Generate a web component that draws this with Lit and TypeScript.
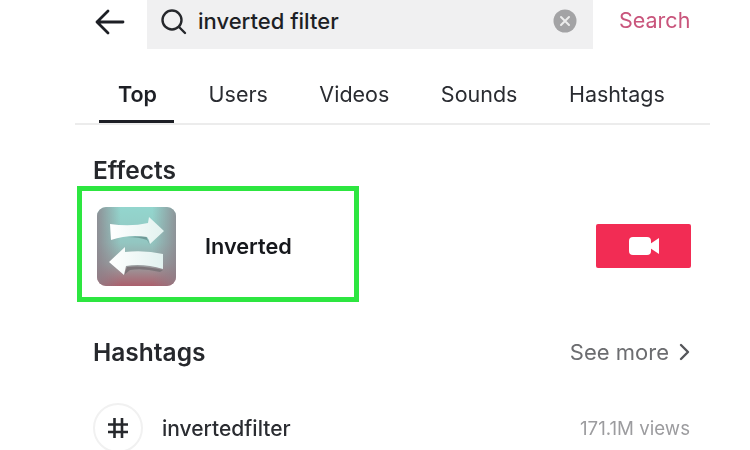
import { LitElement, html, css } from 'lit';
import { customElement } from 'lit/decorators.js';

const tabs = ['Top', 'Users', 'Videos', 'Sounds', 'Hashtags'];

@customElement('app-root')
export class AppRoot extends LitElement {
  static styles = css`
    :host {
      display: block;
      width: 750px;
      height: 450px;
      overflow: hidden;
      background: #fff;
      font-family: Inter, "Liberation Sans", sans-serif;
      color: #1d1f25;
    }
    .page {
      width: 635px;
      margin-left: 75px;
      filter: blur(0.5px);
    }
    .topbar {
      display: flex;
      align-items: center;
      height: 49px;
    }
    .back {
      width: 30px;
      height: 28px;
      margin: 0 0 5px 20px;
    }
    .searchbox {
      display: flex;
      align-items: center;
      width: 446px;
      height: 49px;
      margin-left: 22px;
      padding: 0 16px 7px 13px;
      box-sizing: border-box;
      background: #f0f0f1;
    }
    .searchbox .glass {
      width: 27px;
      height: 27px;
    }
    .query {
      flex: 1;
      margin-left: 11px;
      font-size: 22px;
      font-weight: 500;
    }
    .clear {
      width: 24px;
      height: 24px;
    }
    .search-btn {
      margin: 0 0 9px 26px;
      font-size: 21.5px;
      color: #c9557c;
    }
    .tabs {
      display: flex;
      gap: 51.5px;
      height: 76px;
      padding: 32px 0 0 43px;
      box-sizing: border-box;
      border-bottom: 2px solid #ececec;
      font-size: 21.5px;
      color: #2a2c31;
    }
    .tab {
      position: relative;
      line-height: 26px;
    }
    .tab.active {
      font-weight: 600;
      color: #1d1f25;
    }
    .tab.active::after {
      content: "";
      position: absolute;
      left: -19px;
      right: -17px;
      top: 39px;
      height: 3px;
      background: #1d1f25;
    }
    h2 {
      margin: 0;
      font-size: 24.5px;
      font-weight: 600;
      line-height: 28px;
      color: #26282c;
    }
    .effects {
      padding: 31px 19px 0 0;
    }
    .effects h2 {
      padding-left: 18px;
    }
    .effect-row {
      display: flex;
      align-items: center;
      justify-content: space-between;
      margin-top: 2px;
    }
    .effect {
      display: flex;
      align-items: center;
      width: 282px;
      height: 116px;
      margin-left: 2px;
      padding: 4px 0 0 15px;
      box-sizing: border-box;
      border: 5px solid #2de640;
    }
    .effect svg {
      width: 79px;
      height: 79px;
    }
    .effect-name {
      margin-left: 29px;
      font-size: 21.7px;
      font-weight: 600;
      color: #16181c;
    }
    .record {
      display: flex;
      align-items: center;
      justify-content: center;
      width: 95px;
      height: 44px;
      margin-top: 4px;
      border-radius: 2px;
      background: #f22c54;
    }
    .record svg {
      width: 30px;
      height: 18px;
    }
    .hashtags {
      padding: 36px 20px 0 18px;
    }
    .section-head {
      display: flex;
      align-items: center;
      justify-content: space-between;
    }
    .see-more {
      display: flex;
      align-items: center;
      gap: 10px;
      font-size: 22px;
      color: #6c6d70;
    }
    .see-more svg {
      width: 11px;
      height: 18px;
    }
    .tag-row {
      display: flex;
      align-items: center;
      margin-top: 37px;
    }
    .tag-icon {
      display: flex;
      align-items: center;
      justify-content: center;
      width: 50px;
      height: 50px;
      border: 2px solid #f1f1f1;
      border-radius: 50%;
      box-sizing: border-box;
    }
    .tag-icon svg {
      width: 20px;
      height: 22px;
    }
    .tag-name {
      flex: 1;
      margin-left: 19px;
      font-size: 21px;
      font-weight: 500;
      color: #2a2c31;
    }
    .views {
      font-size: 18.7px;
      color: #9c9c9f;
    }
  `;

  effectIcon() {
    return html`<svg viewBox="0 0 79 79">
      <defs>
        <linearGradient id="base" x1="0" y1="0" x2="0" y2="1">
          <stop offset="0" stop-color="#93d6ce"></stop>
          <stop offset="0.45" stop-color="#93c6c1"></stop>
          <stop offset="0.72" stop-color="#98a3a4"></stop>
          <stop offset="1" stop-color="#ab5f6c"></stop>
        </linearGradient>
        <linearGradient id="side" x1="0" y1="0" x2="1" y2="0">
          <stop offset="0" stop-color="#8c7f88" stop-opacity="0.8"></stop>
          <stop offset="0.3" stop-color="#8c7f88" stop-opacity="0"></stop>
          <stop offset="0.7" stop-color="#8c7f88" stop-opacity="0"></stop>
          <stop offset="1" stop-color="#8c7f88" stop-opacity="0.75"></stop>
        </linearGradient>
        <linearGradient id="arrow" x1="0" y1="0" x2="1" y2="0">
          <stop offset="0" stop-color="#ffffff"></stop>
          <stop offset="1" stop-color="#e2f2ef"></stop>
        </linearGradient>
      </defs>
      <rect width="79" height="79" rx="9" fill="url(#base)"></rect>
      <rect width="79" height="79" rx="9" fill="url(#side)"></rect>
      <path d="M30 30 Q42 30 50 33 L53 38 L49 29 Z" fill="#6f9a97"></path>
      <path d="M30 60 Q45 58 66 63 L63 65 Q46 61 33 63 L27 68 Z" fill="#7c7478"></path>
      <path d="M13 17 Q34 20 51 16 L52 10 L67 24 L53 37 Q52 32 50 30 Q32 27 14 33 Z" fill="url(#arrow)"></path>
      <path d="M12 55 L28 40 L28 45 Q48 43 66 47 L66 62 Q46 56 29 59 L27 68 Z" fill="url(#arrow)"></path>
    </svg>`;
  }

  render() {
    return html`
      <div class="page">
        <div class="topbar">
          <svg class="back" viewBox="0 0 30 28" fill="none" stroke="#1d1f25" stroke-width="2.8" stroke-linecap="round" stroke-linejoin="round">
            <path d="M2 14H28M13 3L2 14L13 25"></path>
          </svg>
          <div class="searchbox">
            <svg class="glass" viewBox="0 0 27 27" fill="none" stroke="#26282c" stroke-width="2.4" stroke-linecap="round">
              <circle cx="12" cy="12" r="9.5"></circle>
              <path d="M19 19L25 25"></path>
            </svg>
            <span class="query">inverted filter</span>
            <svg class="clear" viewBox="0 0 24 24">
              <circle cx="12" cy="12" r="11.5" fill="#a3a3a5"></circle>
              <path d="M8 8L16 16M16 8L8 16" stroke="#ececec" stroke-width="2" stroke-linecap="round"></path>
            </svg>
          </div>
          <span class="search-btn">Search</span>
        </div>
        <div class="tabs">
          ${tabs.map((t, i) => html`<span class="tab ${i === 0 ? 'active' : ''}">${t}</span>`)}
        </div>
        <section class="effects">
          <h2>Effects</h2>
          <div class="effect-row">
            <div class="effect">
              ${this.effectIcon()}
              <span class="effect-name">Inverted</span>
            </div>
            <div class="record">
              <svg viewBox="0 0 30 18">
                <rect x="0" y="0" width="22" height="18" rx="4" fill="#fff"></rect>
                <path d="M21 7L30 1V17L21 11Z" fill="#fff"></path>
              </svg>
            </div>
          </div>
        </section>
        <section class="hashtags">
          <div class="section-head">
            <h2>Hashtags</h2>
            <span class="see-more">See more
              <svg viewBox="0 0 11 18" fill="none" stroke="#55565a" stroke-width="2.4" stroke-linecap="round" stroke-linejoin="round">
                <path d="M2 2L9 9L2 16"></path>
              </svg>
            </span>
          </div>
          <div class="tag-row">
            <div class="tag-icon">
              <svg viewBox="0 0 20 22" fill="none" stroke="#26282c" stroke-width="2.6">
                <path d="M6.5 1V21M14 1V21M0 7.5H20M0 15H20"></path>
              </svg>
            </div>
            <span class="tag-name">invertedfilter</span>
            <span class="views">171.1M views</span>
          </div>
        </section>
      </div>
    `;
  }
}
